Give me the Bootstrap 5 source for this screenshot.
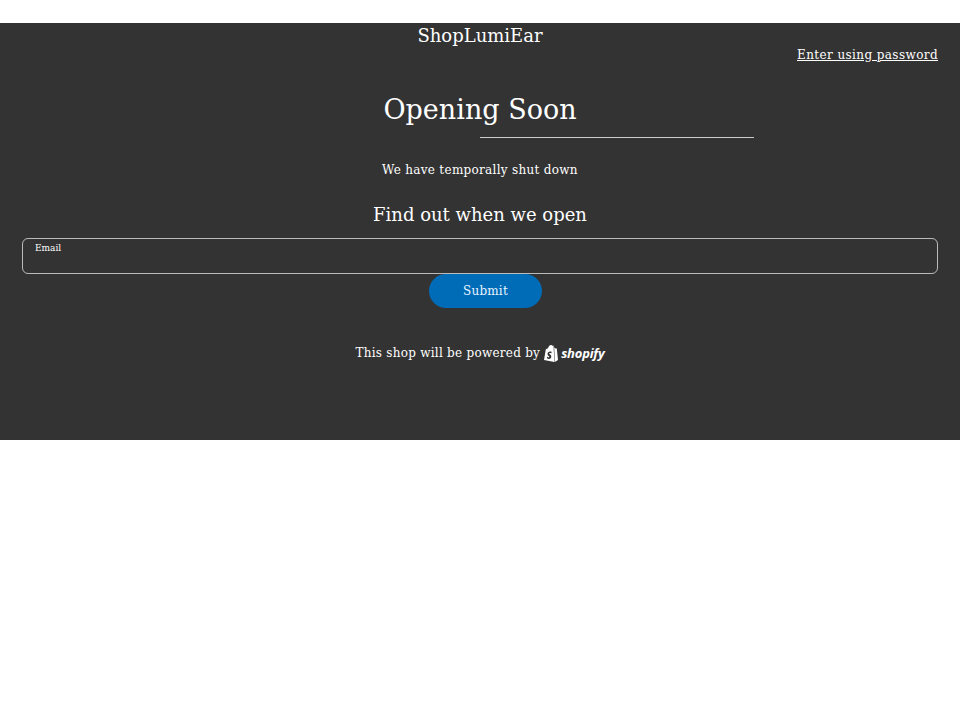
<!DOCTYPE html>
<html lang="en"><head><meta charset="utf-8"><title>ShopLumiEar</title>
<link href="https://cdn.jsdelivr.net/npm/bootstrap@5.3.0/dist/css/bootstrap.min.css" rel="stylesheet">
<style>
body{background:#fff;font-family:"DejaVu Serif",serif;}
.shell{margin-top:23px;height:417px;background:#333;color:#fff;}
.brand{font-size:18px;line-height:26px;}
.pw-row{padding:0 22px;line-height:18px;font-size:12px;margin-top:-3px;}
.pw-row a{color:#fff;letter-spacing:.4px;}
.headline{font-size:27px;font-weight:400;line-height:36px;margin:28px 0 0;}
.rule-wrap{height:1px;margin-top:9px;}
.rule-line{width:274px;height:1px;background:#ccc;margin-left:480px;}
.sub{font-size:12px;line-height:20px;margin:22px 0 0;letter-spacing:.3px;}
.find{font-size:18px;font-weight:400;line-height:26px;margin:22px 0 0;}
.mail-box{margin:10px 22px 0;height:36px;border:1px solid #bbb;border-radius:6px;padding:2px 12px;font-size:9px;line-height:14px;}
.send{width:113px;height:34px;border-radius:17px;background:#006cb8;color:#e8f4ff;border:0;font-size:12px;letter-spacing:.2px;margin-left:429px;display:block;font-family:inherit;}
.power{font-size:12px;margin-top:35px;letter-spacing:.26px;line-height:20px;}
.logo-word{font-family:"Open Sans",sans-serif;font-weight:700;font-style:italic;font-size:13px;letter-spacing:-.2px;margin-left:3px;}
</style></head><body>
<div class="shell">
<div class="brand text-center">ShopLumiEar</div>
<div class="pw-row text-end"><a href="#">Enter using password</a></div>
<h1 class="headline text-center">Opening Soon</h1>
<div class="rule-wrap"><div class="rule-line"></div></div>
<p class="sub text-center">We have temporally shut down</p>
<h2 class="find text-center">Find out when we open</h2>
<div class="mail-box">Email</div>
<button class="send" type="button">Submit</button>
<div class="power d-flex justify-content-center align-items-center gap-1">This shop will be powered by
<span class="d-inline-flex align-items-center"><svg width="14" height="17" viewBox="0 0 14 17"><path fill="#fff" d="M0 15 1.800 4.200 4 3.200C4.500 1.300 5.600 0 7 0c.7 0 1.100.3 1.300.8L9.500.6 10.500 17z"/><path fill="#fff" d="M10.200 2.200l1.300 1.300 1.300.1L14 15 10.800 17z"/><path fill="#333" d="M7.700 6.800 7.300 8.200s-.6-.3-1.200-.3c-.9 0-1 .5-1 .7 0 .8 2.200 1.100 2.200 2.900 0 1.500-.9 2.400-2.200 2.400-1.500 0-2.300-.9-2.300-.9l.4-1.300s.8.700 1.500.7c.4 0 .6-.3.6-.6 0-1-1.800-1.100-1.800-2.800 0-1.500 1.100-2.500 2.700-2.500.9 0 1.500.3 1.500.3z"/></svg><span class="logo-word">shopify</span></span></div>
</div>
</body></html>
